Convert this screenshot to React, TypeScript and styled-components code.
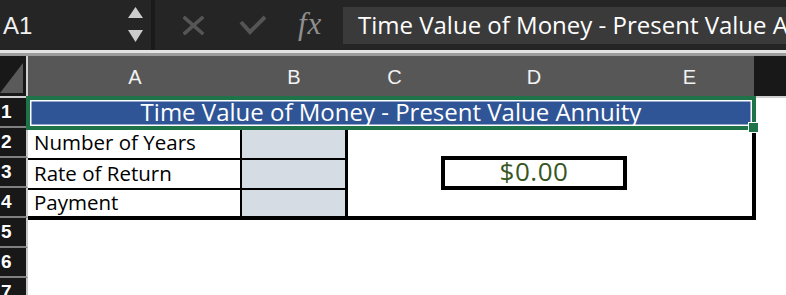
import React from 'react';
import styled, { createGlobalStyle } from 'styled-components';

const colors = {
  toolbar: '#252525',
  toolbarDivider: '#1a1a1a',
  formulaBox: '#3a3a3a',
  mutedIcon: '#555555',
  fx: '#8f8f8f',
  headerGray: '#575757',
  headerDark: '#181818',
  headerLine: '#cfcfcf',
  rowLine: '#808080',
  title: '#2f5597',
  selection: '#1f7349',
  inputFill: '#d6dce4',
  money: '#375623',
};

const cellFont = '"Open Sans", "Noto Sans", sans-serif';
const uiFont = '"Liberation Sans", Arial, sans-serif';

const GlobalStyle = createGlobalStyle`
  html, body {
    margin: 0;
    padding: 0;
    background: #ffffff;
    overflow: hidden;
  }
  * {
    box-sizing: border-box;
  }
`;

const Window = styled.div`
  width: 786px;
  height: 295px;
  overflow: hidden;
  display: flex;
  flex-direction: column;
  background: #ffffff;
`;

/* ---------- formula bar ---------- */

const FormulaBar = styled.div`
  height: 50px;
  flex: 0 0 50px;
  display: flex;
  align-items: center;
  background: ${colors.toolbar};
`;

const NameBox = styled.div`
  flex: 0 0 128px;
  padding-left: 3px;
  margin-top: 2px;
  font-family: ${uiFont};
  font-size: 24px;
  color: #f0f0f0;
`;

const Stepper = styled.svg`
  flex: 0 0 15px;
  display: block;
`;

const Divider = styled.div`
  flex: 0 0 4px;
  align-self: stretch;
  margin-left: 8px;
  background: ${colors.toolbarDivider};
`;

const ActionIcon = styled.svg<{ $gap: number }>`
  display: block;
  flex: 0 0 auto;
  margin-left: ${p => p.$gap}px;
`;

const FxLabel = styled.div`
  flex: 0 0 30px;
  margin-left: 31px;
  margin-top: -2px;
  font-family: "Liberation Serif", "DejaVu Serif", serif;
  font-style: italic;
  font-size: 31px;
  color: ${colors.fx};
  letter-spacing: 1px;
`;

const FormulaInput = styled.div`
  flex: 1 1 auto;
  margin-left: 15px;
  height: 37px;
  display: flex;
  align-items: center;
  padding-left: 15px;
  padding-bottom: 2px;
  background: ${colors.formulaBox};
  font-family: ${cellFont};
  font-size: 24px;
  color: #ffffff;
  white-space: nowrap;
  overflow: hidden;
`;

const BarEdge = styled.div`
  flex: 0 0 6px;
  border-top: 3px solid #e4e4e4;
  background: #9c9c9c;
`;

/* ---------- sheet grid ---------- */

const Sheet = styled.div`
  flex: 1 1 auto;
  display: grid;
  grid-template-columns: 28px 214px 104px 97px 182px 129px 1fr;
  grid-template-rows: 42px repeat(7, 30px);
  background: #ffffff;
`;

type Place = { $col: string | number; $row: string | number };

const Corner = styled.div`
  grid-column: 1;
  grid-row: 1;
  background: ${colors.headerDark};
  border-right: 2px solid ${colors.headerLine};
  border-bottom: 2px solid ${colors.headerLine};
  display: flex;
  align-items: flex-end;
  justify-content: flex-end;
  padding: 0 3px 3px 0;
`;

const ColHeader = styled.div<Place>`
  grid-column: ${p => p.$col};
  grid-row: ${p => p.$row};
  display: flex;
  align-items: center;
  justify-content: center;
  padding-top: 2px;
  background: ${colors.headerGray};
  border-bottom: 2px solid ${colors.headerLine};
  font-family: ${uiFont};
  font-size: 20px;
  color: #f2f2f2;
`;

const HeaderFiller = styled.div`
  grid-column: 7;
  grid-row: 1;
  background: ${colors.headerDark};
  border-bottom: 2px solid ${colors.headerLine};
`;

const RowHeader = styled.div<Place>`
  grid-column: ${p => p.$col};
  grid-row: ${p => p.$row};
  display: flex;
  align-items: center;
  padding-left: 1px;
  background: ${colors.headerDark};
  border-right: 2px solid #c8c8c8;
  border-bottom: 2px solid ${colors.rowLine};
  font-family: ${uiFont};
  font-weight: bold;
  font-size: 19px;
  color: #ffffff;
`;

const TitleCell = styled.div`
  grid-column: 2 / 7;
  grid-row: 2;
  position: relative;
  display: flex;
  align-items: center;
  justify-content: center;
  padding-bottom: 4px;
  background: ${colors.title};
  box-shadow: inset 0 0 0 3.5px #ffffff;
  font-family: ${cellFont};
  font-size: 24px;
  color: #ffffff;
  white-space: nowrap;

  /* active-cell selection frame */
  &::after {
    content: '';
    position: absolute;
    top: -2px;
    left: -2px;
    right: -2px;
    bottom: -2px;
    border: 4px solid ${colors.selection};
    pointer-events: none;
  }
`;

const FillHandle = styled.div`
  position: absolute;
  right: -5px;
  bottom: -5px;
  width: 11px;
  height: 11px;
  background: ${colors.selection};
  border: 1px solid #ffffff;
  z-index: 2;
`;

const LabelCell = styled.div<Place & { $last?: boolean; $first?: boolean }>`
  grid-column: ${p => p.$col};
  grid-row: ${p => p.$row};
  display: flex;
  align-items: center;
  padding-left: 6px;
  padding-bottom: 2px;
  border-right: 2px solid #000000;
  border-top: ${p => (p.$first ? 'none' : '2px solid #000000')};
  border-bottom: ${p => (p.$last ? '2px solid #000000' : 'none')};
  box-shadow: ${p => (p.$last ? '0 2px 0 #000000' : 'none')};
  font-family: ${cellFont};
  font-size: 20.5px;
  color: #000000;
  white-space: nowrap;
`;

const InputCell = styled.div<Place & { $last?: boolean; $first?: boolean }>`
  grid-column: ${p => p.$col};
  grid-row: ${p => p.$row};
  background: ${colors.inputFill};
  border-right: 1px solid #000000;
  border-top: ${p => (p.$first ? 'none' : '2px solid #000000')};
  border-bottom: ${p => (p.$last ? '2px solid #000000' : 'none')};
  box-shadow: ${p => (p.$last ? '0 2px 0 #000000' : 'none')};
`;

const ResultFrame = styled.div`
  grid-column: 4 / 7;
  grid-row: 3 / 6;
  border-left: 2px solid #000000;
  border-right: 2px solid #000000;
  border-bottom: 2px solid #000000;
  box-shadow: 2px 0 0 #000000, 0 2px 0 #000000, 2px 2px 0 #000000;
`;

const ResultCell = styled.div`
  grid-column: 5;
  grid-row: 4;
  display: flex;
  align-items: center;
  justify-content: center;
  padding-bottom: 4px;
  background: #ffffff;
  border: 2px solid #000000;
  box-shadow: 0 0 0 2px #000000;
  font-family: ${cellFont};
  font-size: 26px;
  letter-spacing: 0.5px;
  color: ${colors.money};
  line-height: 1;
`;

const columns = ['A', 'B', 'C', 'D', 'E'];

const inputs = [
  { label: 'Number of Years' },
  { label: 'Rate of Return' },
  { label: 'Payment' },
];

const App = () => {
  const title = 'Time Value of Money - Present Value Annuity';

  return (
    <Window>
      <GlobalStyle />
      <FormulaBar>
        <NameBox>A1</NameBox>
        <Stepper width="15" height="36" viewBox="0 0 15 36">
          <polygon points="7.5,0 15,11 0,11" fill="#cccccc" />
          <polygon points="0,23 15,23 7.5,35" fill="#cccccc" />
        </Stepper>
        <Divider />
        <ActionIcon $gap={28} width="21" height="19" viewBox="0 0 21 19">
          <path d="M2 2 L19 17 M19 2 L2 17" stroke={colors.mutedIcon} strokeWidth="3.6" strokeLinecap="square" />
        </ActionIcon>
        <ActionIcon $gap={35} width="28" height="21" viewBox="0 0 28 21">
          <polyline points="2,7 11,17 26,2" fill="none" stroke={colors.mutedIcon} strokeWidth="4" />
        </ActionIcon>
        <FxLabel>fx</FxLabel>
        <FormulaInput>{title}</FormulaInput>
      </FormulaBar>
      <BarEdge />
      <Sheet>
        <Corner>
          <svg width="23" height="30" viewBox="0 0 23 30">
            <polygon points="23,0 23,30 0,30" fill="#5a5a5a" />
          </svg>
        </Corner>
        {columns.map((letter, i) => (
          <ColHeader key={letter} $col={i + 2} $row={1}>
            {letter}
          </ColHeader>
        ))}
        <HeaderFiller />

        {[1, 2, 3, 4, 5, 6, 7].map(n => (
          <RowHeader key={n} $col={1} $row={n + 1}>
            {n}
          </RowHeader>
        ))}

        <ResultFrame />

        {inputs.map((item, i) => (
          <React.Fragment key={item.label}>
            <LabelCell $col={2} $row={i + 3} $first={i === 0} $last={i === inputs.length - 1}>
              {item.label}
            </LabelCell>
            <InputCell $col={3} $row={i + 3} $first={i === 0} $last={i === inputs.length - 1} />
          </React.Fragment>
        ))}

        <ResultCell>$0.00</ResultCell>

        <TitleCell>
          {title}
          <FillHandle />
        </TitleCell>
      </Sheet>
    </Window>
  );
};

export default App;
